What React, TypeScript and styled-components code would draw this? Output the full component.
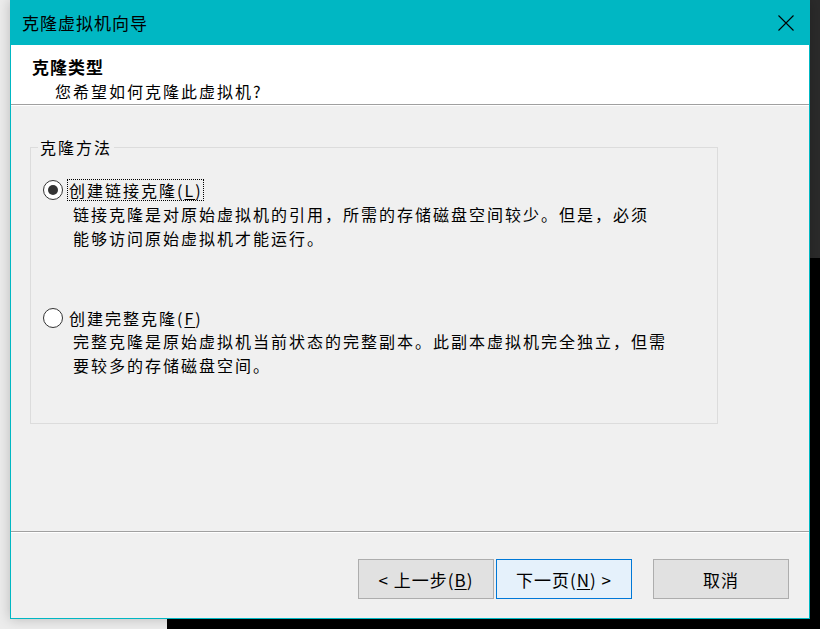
import React from "react";
import styled, { createGlobalStyle } from "styled-components";

const GlobalStyle = createGlobalStyle`
  html, body { margin: 0; padding: 0; }
  body { background: #000; font-family: "Noto Sans CJK SC", "Noto Sans", sans-serif; }
  * { box-sizing: border-box; }
`;

const FONT = `"Noto Sans CJK SC", "Noto Sans", sans-serif`;

const Desktop = styled.div`
  width: 820px;
  height: 629px;
  padding-left: 10px;
  overflow: hidden;
  background:
    linear-gradient(#2b2b2b, #2b2b2b) right top / 10px 258px no-repeat,
    linear-gradient(#ececec, #ececec) left top / 167px 100% no-repeat,
    #000;
`;

const Window = styled.div`
  width: 800px;
  height: 619px;
  border: 1px solid #00b7c3;
  border-top: none;
  display: flex;
  flex-direction: column;
  background: #f0f0f0;
  box-shadow: 0 0 12px rgba(0, 0, 0, 0.22);
`;

const TitleBar = styled.div`
  height: 45px;
  flex: none;
  background: #00b7c3;
  display: flex;
  align-items: center;
  justify-content: space-between;
  padding-left: 11px;
`;

const TitleText = styled.div`
  font-family: ${FONT};
  font-size: 17px;
  letter-spacing: 1px;
  color: #000;
  line-height: 22px;
  margin-top: 1px;
`;

const CloseButton = styled.div`
  width: 46px;
  height: 44px;
  display: flex;
  align-items: center;
  justify-content: center;
`;

const Header = styled.div`
  height: 60px;
  flex: none;
  background: #fff;
  border-bottom: 1px solid #a0a0a0;
  padding: 10px 0 0 21px;
  display: flex;
  flex-direction: column;
`;

const HeaderTitle = styled.div`
  font-family: ${FONT};
  font-size: 17px;
  font-weight: 700;
  letter-spacing: 1px;
  line-height: 24px;
  color: #000;
`;

const HeaderSub = styled.div`
  font-family: ${FONT};
  font-size: 16px;
  letter-spacing: 2px;
  line-height: 24px;
  color: #000;
  padding-left: 23px;
`;

const Body = styled.div`
  flex: 1;
  background: #f0f0f0;
  box-shadow: inset 0 1px 0 #fff;
  padding-top: 32px;
`;

const GroupBox = styled.fieldset`
  margin: 0 0 0 19px;
  padding: 0 0 46px 0;
  width: 688px;
  border: 1px solid #dcdcdc;
  min-inline-size: 0;
`;

const Legend = styled.legend`
  font-family: ${FONT};
  font-size: 16px;
  letter-spacing: 2px;
  line-height: 20px;
  color: #000;
  margin-left: 7px;
  padding: 0 2px;
`;

const Option = styled.div<{ $gap: number }>`
  margin-top: ${(p) => p.$gap}px;
  display: flex;
  flex-direction: column;
`;

const OptionRow = styled.div`
  display: flex;
  align-items: center;
  height: 22px;
  padding-left: 12px;
`;

const Radio = styled.span<{ $checked?: boolean }>`
  width: 20px;
  height: 20px;
  border-radius: 50%;
  border: 1px solid #333;
  background: #fff;
  display: flex;
  align-items: center;
  justify-content: center;
  flex: none;
  &::after {
    content: "";
    width: 10px;
    height: 10px;
    border-radius: 50%;
    background: ${(p) => (p.$checked ? "#333" : "transparent")};
  }
`;

const Label = styled.span<{ $focused?: boolean }>`
  margin-left: 4px;
  height: 22px;
  display: flex;
  align-items: center;
  padding: 0 1px 0 2px;
  font-family: ${FONT};
  font-size: 16px;
  letter-spacing: 2px;
  color: #000;
  outline: ${(p) => (p.$focused ? "1px dotted #000" : "none")};
  outline-offset: -1px;
  u { text-underline-offset: 2px; }
`;

const Description = styled.div<{ $gap: number }>`
  margin-top: ${(p) => p.$gap}px;
  padding-left: 42px;
  font-family: ${FONT};
  font-size: 16px;
  letter-spacing: 2px;
  line-height: 24px;
  color: #000;
`;

const Footer = styled.div`
  height: 87px;
  flex: none;
  border-top: 1px solid #a0a0a0;
  box-shadow: inset 0 1px 0 #fff;
  display: flex;
  justify-content: flex-end;
  align-items: flex-start;
  padding: 27px 20px 0 0;
`;

const Button = styled.button<{ $primary?: boolean; $gapLeft?: number }>`
  width: 136px;
  height: 40px;
  margin-left: ${(p) => p.$gapLeft ?? 0}px;
  background: ${(p) => (p.$primary ? "#e5f1fb" : "#e1e1e1")};
  border: 1px solid ${(p) => (p.$primary ? "#0078d7" : "#adadad")};
  font-family: ${FONT};
  font-size: 17px;
  letter-spacing: 1px;
  color: #000;
  padding: 0;
  display: flex;
  align-items: center;
  justify-content: center;
  u { text-underline-offset: 2px; }
`;

export default function App() {
  return (
    <>
      <GlobalStyle />
      <Desktop>
        <Window>
          <TitleBar>
            <TitleText>克隆虚拟机向导</TitleText>
            <CloseButton>
              <svg width="16" height="16" viewBox="0 0 16 16">
                <path d="M0.5 0.5 L15.5 15.5 M15.5 0.5 L0.5 15.5" stroke="#000" strokeWidth="1.1" fill="none" />
              </svg>
            </CloseButton>
          </TitleBar>
          <Header>
            <HeaderTitle>克隆类型</HeaderTitle>
            <HeaderSub>您希望如何克隆此虚拟机?</HeaderSub>
          </Header>
          <Body>
            <GroupBox>
              <Legend>克隆方法</Legend>
              <Option $gap={22}>
                <OptionRow>
                  <Radio $checked />
                  <Label $focused>
                    创建链接克隆(<u>L</u>)
                  </Label>
                </OptionRow>
                <Description $gap={1}>
                  链接克隆是对原始虚拟机的引用，所需的存储磁盘空间较少。但是，必须
                  <br />
                  能够访问原始虚拟机才能运行。
                </Description>
              </Option>
              <Option $gap={57}>
                <OptionRow>
                  <Radio />
                  <Label>
                    创建完整克隆(<u>F</u>)
                  </Label>
                </OptionRow>
                <Description $gap={0}>
                  完整克隆是原始虚拟机当前状态的完整副本。此副本虚拟机完全独立，但需
                  <br />
                  要较多的存储磁盘空间。
                </Description>
              </Option>
            </GroupBox>
          </Body>
          <Footer>
            <Button>
              &lt; 上一步(<u>B</u>)
            </Button>
            <Button $primary $gapLeft={2}>
              下一页(<u>N</u>) &gt;
            </Button>
            <Button $gapLeft={21}>取消</Button>
          </Footer>
        </Window>
      </Desktop>
    </>
  );
}
